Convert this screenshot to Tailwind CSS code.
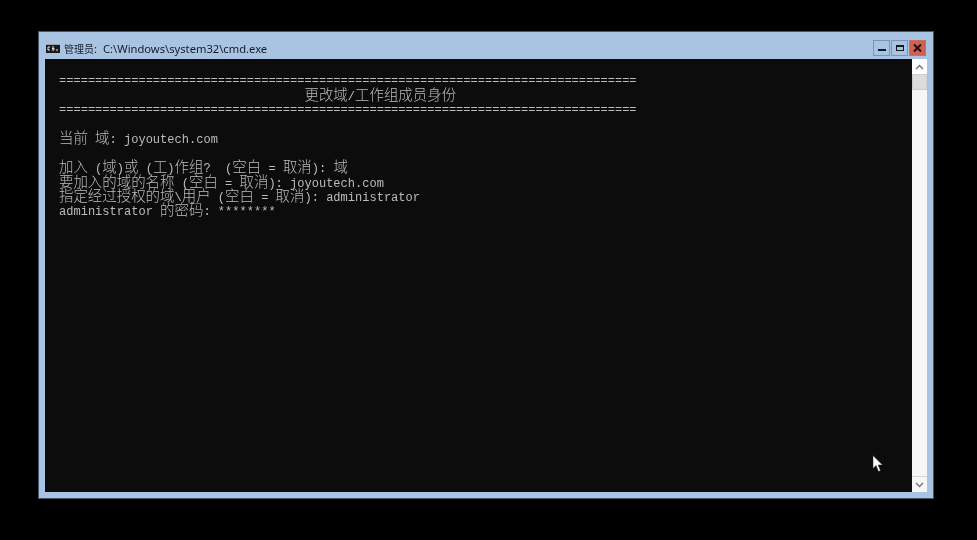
<!DOCTYPE html>
<html><head><meta charset="utf-8"><script src="https://cdn.jsdelivr.net/npm/@tailwindcss/browser@4"></script></head>
<body class="bg-black w-[977px] h-[540px] overflow-hidden relative pt-[31px] pl-[38px]">
<div class="w-[896px] h-[468px] border border-[#46556a] bg-[#a9c4e2] flex flex-col">
  <div class="h-[27px] shrink-0 flex items-start">
    <svg class="ml-[7px] mt-[12px] shrink-0" width="14" height="9" viewBox="0 0 14 9"><rect width="14" height="9" fill="#1a1a1a"/><rect y="0" width="14" height="1" fill="#9aa4b0"/><path d="M2 3h2M2 3v3M2 6h2M6 3h2M6 4.500h2M8 4.500v1.500h-2M10 6h2" stroke="#e8e8e8" fill="none"/></svg>
    <div class="ml-[4px] mt-[9px] h-[16px] leading-[16px] flex blur-[0.25px] text-[#141c26] text-[11.2px] font-['Noto_Sans','Noto_Sans_CJK_SC',sans-serif]"><span class="text-[10px]">管理员</span><span>:</span><span class="ml-[6px] whitespace-pre">C:\Windows\system32\cmd.exe</span></div>
    <div class="ml-auto mr-[7px] mt-[8px] flex gap-[1px]">
      <div class="w-[17px] h-[16px] border border-[#7c95b4] bg-[#a9c4e2] flex items-end justify-center pb-[4px]"><div class="w-[8px] h-[2px] bg-[#101820]"></div></div>
      <div class="w-[17px] h-[16px] border border-[#7c95b4] bg-[#a9c4e2] flex items-center justify-center"><div class="w-[8px] h-[6px] border border-t-2 border-[#101820]"></div></div>
      <div class="w-[17px] h-[16px] bg-[#d0604f] border border-[#c76e60] flex items-center justify-center"><svg width="9" height="8" viewBox="0 0 9 8"><path d="M1 0.500L8 7.500M8 0.500L1 7.500" stroke="#1a1010" stroke-width="2"/></svg></div>
    </div>
  </div>
  <div class="flex h-[433px] ml-[6px] mr-[6px]">
    <div class="w-[867px] bg-[#0c0c0c] pl-[14px] pt-[1px] blur-[0.25px] text-[#bcbcbc] text-[12.04px] leading-[14.45px] font-['Liberation_Mono','Noto_Sans_CJK_SC',monospace]">
      <div class="h-[14.45px]"></div>
      <div class="h-[14.45px] whitespace-pre">================================================================================</div>
      <div class="h-[14.45px] whitespace-pre">                                  <span class="text-[14.45px] font-light">更改域</span>/<span class="text-[14.45px] font-light">工作组成员身份</span></div>
      <div class="h-[14.45px] whitespace-pre">================================================================================</div>
      <div class="h-[14.45px]"></div>
      <div class="h-[14.45px] whitespace-pre"><span class="text-[14.45px] font-light">当前</span> <span class="text-[14.45px] font-light">域</span>: joyoutech.com</div>
      <div class="h-[14.45px]"></div>
      <div class="h-[14.45px] whitespace-pre"><span class="text-[14.45px] font-light">加入</span> (<span class="text-[14.45px] font-light">域</span>)<span class="text-[14.45px] font-light">或</span> (<span class="text-[14.45px] font-light">工</span>)<span class="text-[14.45px] font-light">作组</span>?  (<span class="text-[14.45px] font-light">空白</span> = <span class="text-[14.45px] font-light">取消</span>): <span class="text-[14.45px] font-light">域</span></div>
      <div class="h-[14.45px] whitespace-pre"><span class="text-[14.45px] font-light">要加入的域的名称</span> (<span class="text-[14.45px] font-light">空白</span> = <span class="text-[14.45px] font-light">取消</span>): joyoutech.com</div>
      <div class="h-[14.45px] whitespace-pre"><span class="text-[14.45px] font-light">指定经过授权的域</span>\<span class="text-[14.45px] font-light">用户</span> (<span class="text-[14.45px] font-light">空白</span> = <span class="text-[14.45px] font-light">取消</span>): administrator</div>
      <div class="h-[14.45px] whitespace-pre">administrator <span class="text-[14.45px] font-light">的密码</span>: ********</div>
    </div>
    <div class="w-[15px] bg-[#f6f6f6] flex flex-col">
      <div class="h-[15px] shrink-0 bg-white flex items-center justify-center"><svg width="9" height="6" viewBox="0 0 9 6"><path d="M1 5L4.500 1.500L8 5" stroke="#777" stroke-width="1.500" fill="none"/></svg></div>
      <div class="h-[16px] shrink-0 bg-[#dcdcdc] border border-[#cdcdcd]"></div>
      <div class="flex-1 border-b border-[#d4d4d4]"></div>
      <div class="h-[15px] shrink-0 bg-[#f6f6f6] flex items-center justify-center"><svg width="9" height="6" viewBox="0 0 9 6"><path d="M1 1L4.500 4.500L8 1" stroke="#777" stroke-width="1.500" fill="none"/></svg></div>
    </div>
  </div>
</div>
<svg class="absolute left-[872px] top-[455px]" width="12" height="18" viewBox="0 0 12 18"><path d="M1 0.500V13.500L4 10.500L6.500 16.500L8.500 15.500L6.200 10H10.500Z" fill="#fff" stroke="#222" stroke-width="0.500"/></svg>
</body></html>
